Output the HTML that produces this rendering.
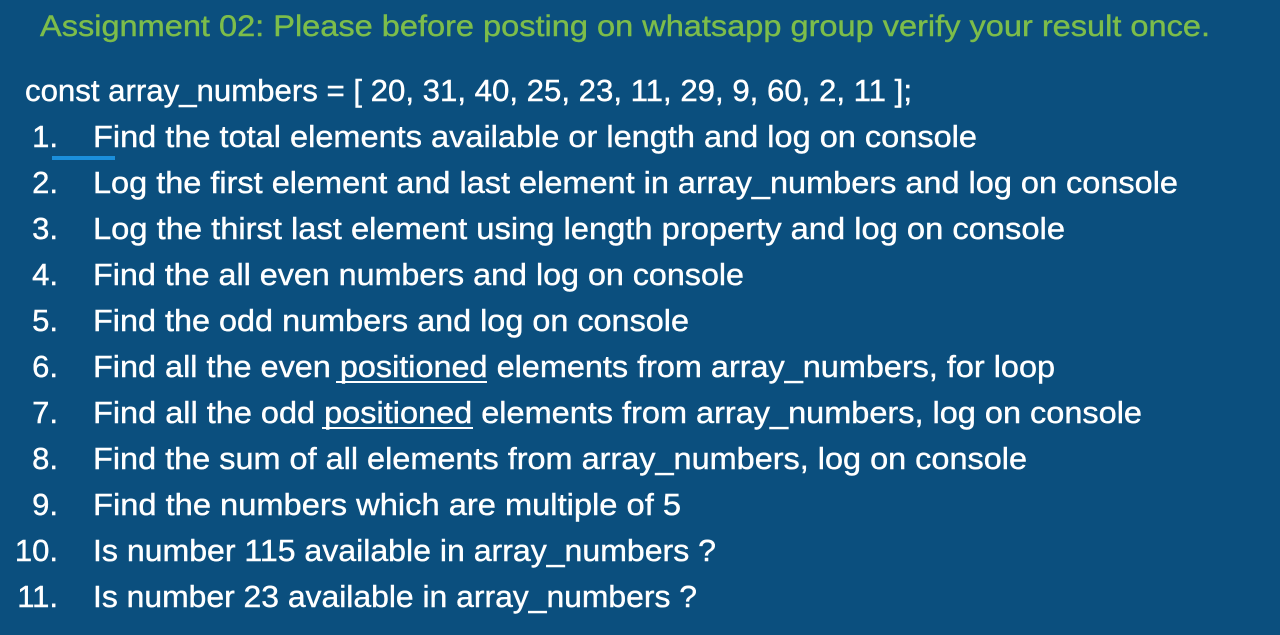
<!DOCTYPE html>
<html><head><meta charset="utf-8"><style>
html,body{margin:0;padding:0;background:#0b4f7e;}
svg{display:block}
text{font-family:"Liberation Sans",Arial,sans-serif;fill:#fff;font-size:31px;stroke:#fff;stroke-width:0.4}
</style></head><body>
<svg width="1280" height="635" viewBox="0 0 1280 635" xmlns="http://www.w3.org/2000/svg">
<rect width="1280" height="635" fill="#0b4f7e"/>
<text x="40" y="36" style="fill:#7dbd4a;stroke:#7dbd4a;font-size:30px" textLength="1170" lengthAdjust="spacingAndGlyphs">Assignment 02: Please before posting on whatsapp group verify your result once.</text>
<text x="25" y="101" textLength="887" lengthAdjust="spacingAndGlyphs">const array_numbers = [ 20, 31, 40, 25, 23, 11, 29, 9, 60, 2, 11 ];</text>
<g text-anchor="end">
<text x="58" y="147">1.</text><text x="58" y="193">2.</text><text x="58" y="239">3.</text>
<text x="58" y="285">4.</text><text x="58" y="331">5.</text><text x="58" y="377">6.</text>
<text x="58" y="423">7.</text><text x="58" y="469">8.</text><text x="58" y="515">9.</text>
<text x="58" y="561">10.</text><text x="58" y="607">11.</text>
</g>
<text x="93" y="147" textLength="884" lengthAdjust="spacingAndGlyphs">Find the total elements available or length and log on console</text>
<text x="93" y="193" textLength="1085" lengthAdjust="spacingAndGlyphs">Log the first element and last element in array_numbers and log on console</text>
<text x="93" y="239" textLength="972" lengthAdjust="spacingAndGlyphs">Log the thirst last element using length property and log on console</text>
<text x="93" y="285" textLength="651" lengthAdjust="spacingAndGlyphs">Find the all even numbers and log on console</text>
<text x="93" y="331" textLength="596" lengthAdjust="spacingAndGlyphs">Find the odd numbers and log on console</text>
<text x="93" y="377" textLength="962" lengthAdjust="spacingAndGlyphs">Find all the even positioned elements from array_numbers, for loop</text>
<text x="93" y="423" textLength="1049" lengthAdjust="spacingAndGlyphs">Find all the odd positioned elements from array_numbers, log on console</text>
<text x="93" y="469" textLength="934" lengthAdjust="spacingAndGlyphs">Find the sum of all elements from array_numbers, log on console</text>
<text x="93" y="515" textLength="588" lengthAdjust="spacingAndGlyphs">Find the numbers which are multiple of 5</text>
<text x="93" y="561" textLength="623" lengthAdjust="spacingAndGlyphs">Is number 115 available in array_numbers ?</text>
<text x="93" y="607" textLength="604" lengthAdjust="spacingAndGlyphs">Is number 23 available in array_numbers ?</text>
<rect x="336" y="381" width="151" height="2" fill="#fff"/>
<rect x="322" y="427" width="151" height="2" fill="#fff"/>
<rect x="52" y="156" width="63" height="4" fill="#1b8fdc"/>
</svg>
</body></html>
